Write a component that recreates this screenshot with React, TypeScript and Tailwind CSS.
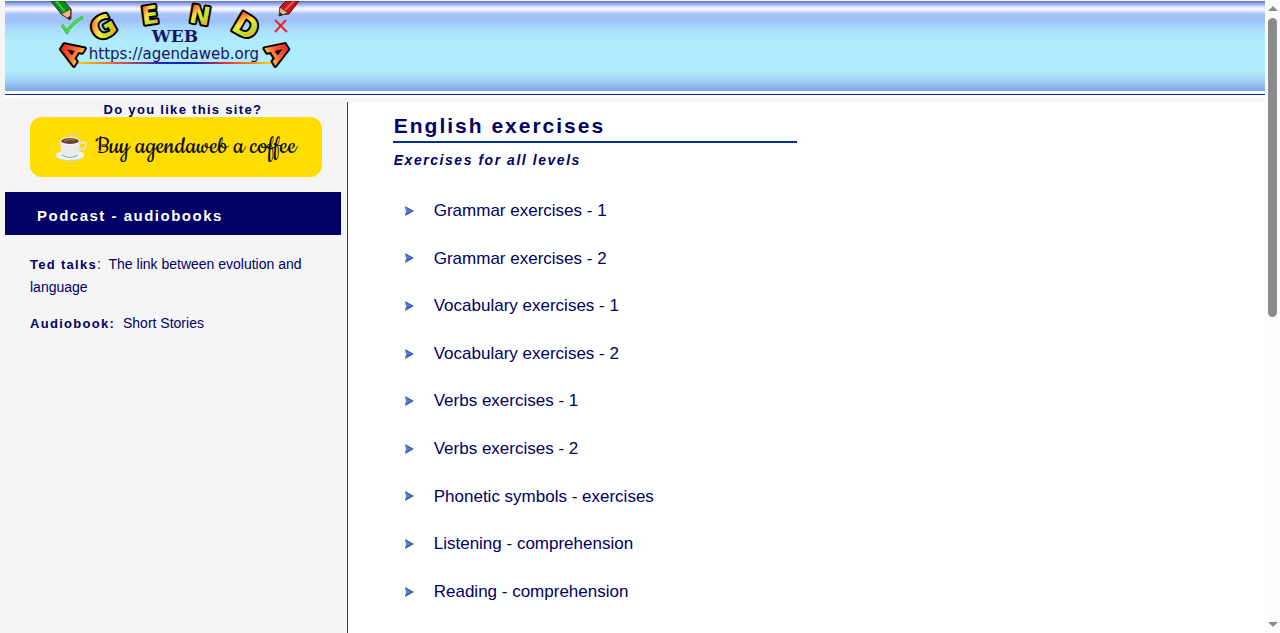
const EXERCISES = [
  "Grammar exercises - 1",
  "Grammar exercises - 2",
  "Vocabulary exercises - 1",
  "Vocabulary exercises - 2",
  "Verbs exercises - 1",
  "Verbs exercises - 2",
  "Phonetic symbols - exercises",
  "Listening - comprehension",
  "Reading - comprehension",
];

const ARC_LETTERS = [
  { char: "A", x: 66, y: 51, angle: -58, size: 27 },
  { char: "G", x: 98, y: 26, angle: -30, size: 30 },
  { char: "E", x: 145, y: 14, angle: -8, size: 25 },
  { char: "N", x: 195, y: 14, angle: 10, size: 25 },
  { char: "D", x: 241, y: 25, angle: 30, size: 30 },
  { char: "A", x: 273, y: 51, angle: 58, size: 27 },
];

function Logo() {
  return (
    <svg viewBox="0 0 310 90" className="h-[90px] w-[310px]" role="img" aria-label="Agenda Web">
      <defs>
        <linearGradient id="letter" x1="0" y1="0" x2="1" y2="1">
          <stop offset="0.15" stopColor="#ff4a32" />
          <stop offset="0.4" stopColor="#ffe640" />
          <stop offset="0.6" stopColor="#b4e62c" />
          <stop offset="0.85" stopColor="#ff9a30" />
        </linearGradient>
        <linearGradient id="letterRed" x1="0" y1="0" x2="0" y2="1">
          <stop offset="0.2" stopColor="#f03030" />
          <stop offset="0.55" stopColor="#ff6035" />
          <stop offset="0.85" stopColor="#ffc83c" />
        </linearGradient>
        <linearGradient id="rule" x1="0" x2="1">
          <stop offset="0" stopColor="#ffd800" />
          <stop offset="0.2" stopColor="#f06030" />
          <stop offset="0.45" stopColor="#2020c0" />
          <stop offset="0.6" stopColor="#2020b0" />
          <stop offset="0.75" stopColor="#e83030" />
          <stop offset="1" stopColor="#ffe000" />
        </linearGradient>
      </defs>

      <rect x="69" y="61" width="202" height="2" fill="url(#rule)" />

      {ARC_LETTERS.map((l, i) => (
        <text
          key={i}
          x="0"
          y="0"
          dy="0.36em"
          textAnchor="middle"
          transform={`translate(${l.x} ${l.y}) rotate(${l.angle})`}
          fontSize={l.size}
          fill={l.char === "A" ? "url(#letterRed)" : "url(#letter)"}
          stroke="#000"
          strokeWidth="4"
          strokeLinejoin="round"
          paintOrder="stroke"
          className="font-['DejaVu_Sans'] font-bold"
        >
          {l.char}
        </text>
      ))}

      {/* green pencil and tick */}
      <path d="M46 0 57 14 66 18 66 8 59 0Z" fill="#0b8a18" stroke="#123c10" strokeWidth="1" />
      <path d="M51 0 61 12" stroke="#38c840" strokeWidth="2" />
      <path d="M56 13 66 8 65 19Z" fill="#efb98b" stroke="#5a3a20" strokeWidth="1" />
      <path d="M62 17 65 19 65 15Z" fill="#222" />
      <path d="M57 24 62 31Q67 22 78 16" fill="none" stroke="#159a18" strokeWidth="3" />
      <path d="M57 24 62 31Q67 22 78 16" fill="none" stroke="#45e83c" strokeWidth="2" />

      {/* red pencil and cross */}
      <path d="M281 0 275 6 275 14 284 13 294 0Z" fill="#c4181c" stroke="#5c1010" strokeWidth="1" />
      <path d="M289 0 279 10" stroke="#f05848" strokeWidth="2" />
      <path d="M275 6 283 12 274 15Z" fill="#efb98b" stroke="#5a3a20" strokeWidth="1" />
      <path d="M274 15 275 11 278 14Z" fill="#222" />
      <path d="M270 19 282 31M281 19 270 31" stroke="#ef2028" strokeWidth="2" />

      <text x="170" y="41" textAnchor="middle" fontSize="17" fill="#17155f" className="font-['DejaVu_Serif'] font-bold">
        WEB
      </text>
      <text x="169" y="58" textAnchor="middle" fontSize="15" fill="#17155f" className="font-['DejaVu_Sans']">
        https://agendaweb.org
      </text>
    </svg>
  );
}

function CoffeeCup() {
  return (
    <svg viewBox="0 0 32 32" className="h-8 w-8" aria-hidden="true">
      <path d="M14 6Q12 4 17 3T20 0M19 6Q19 4 24 3" fill="none" stroke="#d5d6a0" strokeWidth="2" opacity="0.7" />
      <ellipse cx="15" cy="25" rx="14" ry="5" fill="#cfd8dc" />
      <ellipse cx="15" cy="24" rx="14" ry="5" fill="#f0f2f3" />
      <path d="M7 24Q15 29 23 24" fill="none" stroke="#6fa8a8" strokeWidth="1" />
      <path d="M25 12Q31 10 31 14T24 19" fill="none" stroke="#dfe3e5" strokeWidth="2" />
      <path d="M5 10Q5 22 10 24Q15 26 20 24Q25 21 25 10Z" fill="#e8eaeb" />
      <ellipse cx="15" cy="10" rx="10" ry="4" fill="#f8f8f8" />
      <ellipse cx="15" cy="10" rx="9" ry="3" fill="#704538" />
      <path d="M9 10Q14 7 20 9" fill="none" stroke="#a67b68" strokeWidth="1" />
    </svg>
  );
}

function Sidebar() {
  return (
    <aside className="w-[27.2%] shrink-0 border-r border-[#004a94] bg-[#f5f5f5] pr-1.5">
      <p className="pl-20 pr-[60px] text-center text-[13px] leading-[15px] font-bold tracking-[0.1em] whitespace-nowrap">
        Do you like this site?
      </p>
      <a
        href="#coffee"
        className="mr-[19px] ml-[25px] flex h-[60px] items-center justify-center gap-2 rounded-xl bg-[#ffdd00] text-[#0d0c22]"
      >
        <CoffeeCup />
        <span className="font-['Cookie','Liberation_Serif',cursive] text-[28px] whitespace-nowrap">
          Buy agendaweb a coffee
        </span>
      </a>
      <h2 className="mt-[15px] bg-[#000066] px-8 pt-3.5 pb-[9px] text-[15px] leading-5 font-bold tracking-[0.1em] text-white">
        Podcast - audiobooks
      </h2>
      <div className="space-y-[13px] px-[25px] pt-[18px] text-[14px] leading-[23px]">
        <p>
          <strong className="text-[13px] tracking-[0.1em]">Ted talks</strong>:&nbsp;{" "}
          <a href="#ted-talks">The link between evolution and language</a>
        </p>
        <p>
          <strong className="text-[13px] tracking-[0.1em]">Audiobook:</strong>&nbsp;{" "}
          <a href="#short-stories">Short Stories</a>
        </p>
      </div>
    </aside>
  );
}

function ScrollRail() {
  return (
    <div className="flex w-[15px] shrink-0 flex-col items-center bg-[#fcfcfc] py-1.5" aria-hidden="true">
      <svg viewBox="0 0 10 5" className="h-[5px] w-2.5">
        <path d="M0 5 5 0 10 5Z" fill="#8b8b8b" />
      </svg>
      <div className="flex w-full flex-1 justify-center py-[7px]">
        <div className="h-1/2 w-[9px] rounded-full bg-[#8b8b8b]" />
      </div>
      <svg viewBox="0 0 10 5" className="h-[5px] w-2.5">
        <path d="M0 0 5 5 10 0Z" fill="#8b8b8b" />
      </svg>
    </div>
  );
}

export default function App() {
  return (
    <div className="flex h-screen bg-[#f5f5f5] font-['Liberation_Sans',Arial,sans-serif] text-[#000066]">
      <div className="flex min-w-0 flex-1 flex-col pt-px pl-[5px]">
        <header className="border-b border-[#003399] bg-white pb-[3px]">
          <div className="bg-[linear-gradient(to_bottom,#5b72cf_0px,#9aabe9_3px,#f3f5ff_7px,#f0f4ff_9px,#a9c2fa_13px,#9ec2fa_20px,#abdcfc_28px,#b0eafd_38px,#b0ecfd_70px,#a2d0f2_80px,#7da5e3_90px)]">
            <Logo />
          </div>
        </header>
        <div className="h-[3px] bg-white" />
        <div className="h-1" />
        <div className="flex flex-1 bg-white">
          <Sidebar />
          <main className="flex-1 pl-[45px]">
            <h1 className="w-[46.4%] min-w-fit border-b-2 border-[#003399] pt-[11px] pb-[3px] pl-px text-[21px] leading-[25px] font-bold tracking-[2px]">
              English exercises
            </h1>
            <p className="pt-2 pl-px text-[14px] leading-[18px] font-bold tracking-[0.11em] italic">
              Exercises for all levels
            </p>
            <ul className="pt-[18px] pl-3 text-[17px] leading-[2.8]">
              {EXERCISES.map((name) => (
                <li key={name} className="flex items-center">
                  <svg viewBox="0 0 9 10" className="mr-5 h-2.5 w-[9px]" aria-hidden="true">
                    <path d="M0 0 9 5 0 10 1 5Z" fill="#3b5cb8" />
                    <path d="M1 2 6 5 1 7Z" fill="#6080d0" />
                  </svg>
                  <a href="#exercises">{name}</a>
                </li>
              ))}
            </ul>
          </main>
        </div>
      </div>
      <ScrollRail />
    </div>
  );
}
